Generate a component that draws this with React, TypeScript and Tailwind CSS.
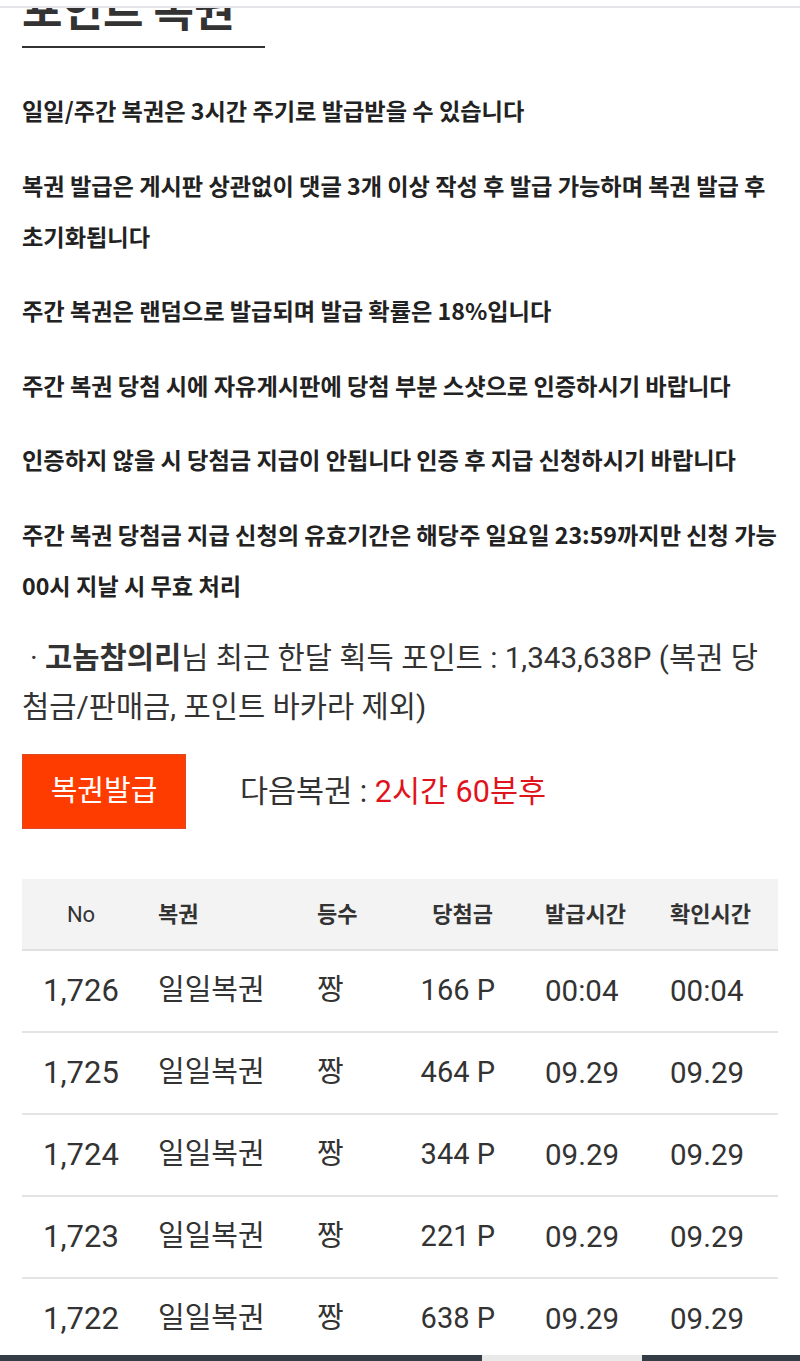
import React from "react";

const F = { fontFamily: 'Roboto, "Noto Sans CJK KR", "Noto Sans", sans-serif' };
const K = { fontFamily: '"Noto Sans CJK KR", "Noto Sans", sans-serif' };

const rules: string[][] = [
  ["일일/주간 복권은 3시간 주기로 발급받을 수 있습니다"],
  ["복권 발급은 게시판 상관없이 댓글 3개 이상 작성 후 발급 가능하며 복권 발급 후", "초기화됩니다"],
  ["주간 복권은 랜덤으로 발급되며 발급 확률은 18%입니다"],
  ["주간 복권 당첨 시에 자유게시판에 당첨 부분 스샷으로 인증하시기 바랍니다"],
  ["인증하지 않을 시 당첨금 지급이 안됩니다 인증 후 지급 신청하시기 바랍니다"],
  ["주간 복권 당첨금 지급 신청의 유효기간은 해당주 일요일 23:59까지만 신청 가능", "00시 지날 시 무효 처리"],
];

const rows = [
  ["1,726", "일일복권", "짱", "166 P", "00:04", "00:04"],
  ["1,725", "일일복권", "짱", "464 P", "09.29", "09.29"],
  ["1,724", "일일복권", "짱", "344 P", "09.29", "09.29"],
  ["1,723", "일일복권", "짱", "221 P", "09.29", "09.29"],
  ["1,722", "일일복권", "짱", "638 P", "09.29", "09.29"],
];

const cols = "grid grid-cols-[118px_158px_102px_115px_125px_138px] items-center";

export default function App() {
  return (
    <div className="relative w-[800px] h-[1361px] overflow-hidden bg-white" style={F}>
      <div className="fixed top-0 left-0 w-[800px] h-[8px] bg-white border-b-2 border-[#e4e5e8] z-10" />
      <div className="px-[22px]">
        <div className="mt-[-14px] w-[243px] border-b-2 border-[#333] pb-[16px]" style={K}>
          <h1 className="text-[44px] leading-[44px] font-bold text-[#333] whitespace-nowrap">포인트 복권</h1>
        </div>
        <div className="mt-[37px] flex flex-col gap-[23.5px]" style={K}>
          {rules.map((p, i) => (
            <p key={i} className="text-[23.2px] leading-[51px] font-bold text-[#222]">
              {p.map((l, j) => (
                <span key={j} className="block whitespace-nowrap">{l}</span>
              ))}
            </p>
          ))}
        </div>
        <p className="mt-[23px] text-[29.6px] leading-[49px] text-[#333]">
          <span className="block whitespace-nowrap pl-[8px]">
            · <b className="font-bold">고놈참의리</b>님 최근 한달 획득 포인트 : 1,343,638P (복권 당
          </span>
          <span className="block whitespace-nowrap">첨금/판매금, 포인트 바카라 제외)</span>
        </p>
        <div className="mt-[22.5px] flex items-center">
          <button className="w-[164px] h-[75px] bg-[#ff3c00] border border-[#d94a26] text-white text-[29px]">
            복권발급
          </button>
          <div className="ml-[54px] text-[30.5px] text-[#333] whitespace-nowrap">
            다음복권 :&nbsp;<span className="text-[#e0141c]">2시간 60분후</span>
          </div>
        </div>
        <div className="mt-[50px] w-[756px]">
          <div className={`${cols} h-[72px] bg-[#f3f3f3] border-b-2 border-[#e0e0e0] text-[22px] font-bold text-[#333]`}>
            <div className="text-center font-normal">No</div>
            <div className="pl-[18px]">복권</div>
            <div className="pl-[19px]">등수</div>
            <div className="text-right pr-[22px]">당첨금</div>
            <div className="pl-[30px]">발급시간</div>
            <div className="pl-[30px]">확인시간</div>
          </div>
          {rows.map((r, i) => (
            <div key={i} className={`${cols} h-[82px] border-b-2 border-[#e4e4e4] text-[29px] text-[#333]`}>
              <div className="text-center text-[31px]">{r[0]}</div>
              <div className="pl-[18px]">{r[1]}</div>
              <div className="pl-[19px]">{r[2]}</div>
              <div className="text-right pr-[20px]">{r[3]}</div>
              <div className="pl-[30px] text-[29.5px]">{r[4]}</div>
              <div className="pl-[30px] text-[29.5px]">{r[5]}</div>
            </div>
          ))}
        </div>
      </div>
      <div className="fixed bottom-0 left-0 w-[800px] h-[6px] bg-[#343d46] flex">
        <div className="ml-[482px] w-[160px] h-full bg-[#e9e9e9]" />
      </div>
    </div>
  );
}
